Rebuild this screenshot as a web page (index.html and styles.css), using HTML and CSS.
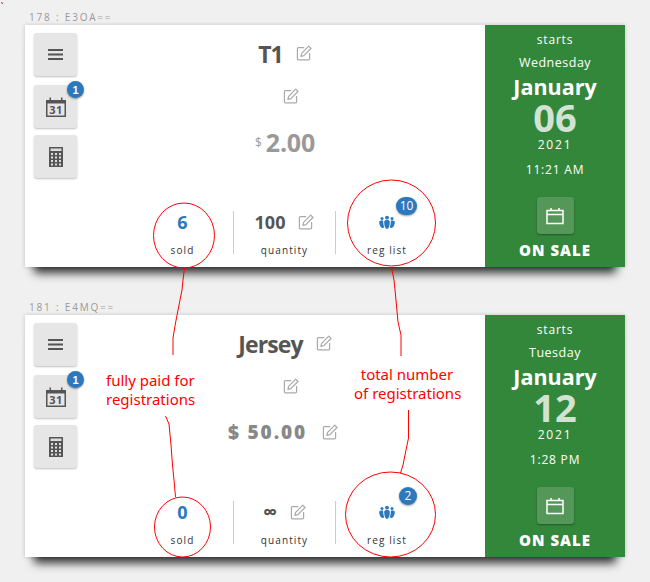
FILE: index.html
```html
<!DOCTYPE html>
<html lang="en">
<head>
<meta charset="utf-8">
<title>Tickets</title>
<link rel="stylesheet" href="styles.css">
</head>
<body>
<svg width="0" height="0" class="defs">
  <defs>
    <symbol id="edit" viewBox="0 0 16 16">
      <path d="M8.2 2.6H2.4a1 1 0 0 0-1 1v10.2a1 1 0 0 0 1 1h10.2a1 1 0 0 0 1-1V8" fill="none" stroke="currentColor" stroke-width="1.2"/>
      <path d="M5.6 8.4 12.7 1.2l2.3 2.3-7.1 7.2-3 .7z" fill="none" stroke="currentColor" stroke-width="1.2" stroke-linejoin="round"/>
    </symbol>
    <symbol id="people" viewBox="0 0 16 14">
      <circle cx="8" cy="2.2" r="1.9"/><circle cx="3" cy="3" r="1.5"/><circle cx="13" cy="3" r="1.5"/>
      <path d="M5.2 6.2c0-1 1-1.6 2.8-1.6s2.8.6 2.8 1.6c0 3-.8 7.3-2.8 7.3S5.2 9.200 5.200 6.200z"/>
      <path d="M.2 6.500c0-1 1-1.500 2.800-1.500.5 0 .8 0 1.200.2-.2 2 .3 4.800 1.100 6.500-.5.600-1.100.8-1.700.8C1.600 12.500.200 9 .200 6.500zM15.800 6.500c0-1-1-1.500-2.800-1.500-.5 0-.8 0-1.200.2.200 2-.3 4.800-1.100 6.500.5.600 1.100.8 1.700.8 2 0 3.400-3.500 3.400-6z"/>
    </symbol>
    <symbol id="menu" viewBox="0 0 15 11">
      <rect width="15" height="2"/><rect y="4.500" width="15" height="2"/><rect y="9" width="15" height="2"/>
    </symbol>
    <symbol id="calendar" viewBox="0 0 20 20">
      <path d="M0 3h3.500V.5h1.500V3h10V.5h1.500V3H20v17H0z" fill="#555"/>
      <rect x="1.500" y="6.500" width="17" height="12" fill="#e6e6e6"/>
      <text x="10" y="17" class="cal-num">31</text>
    </symbol>
    <symbol id="calc" viewBox="0 0 14 20">
      <rect width="14" height="20" fill="#555"/>
      <rect x="1.500" y="1.500" width="11" height="2.500" fill="#ddd"/>
      <path d="M2 6h2v2H2zM6 6h2v2H6zM10 6h2v2h-2zM2 9.500h2v2H2zM6 9.500h2v2H6zM10 9.500h2v2h-2zM2 13h2v2H2zM6 13h2v2H6zM10 13h2v2h-2zM2 16.500h2v2H2zM6 16.500h2v2H6zM10 16.500h2v2h-2z" fill="#ddd"/>
    </symbol>
    <symbol id="cal-outline" viewBox="0 0 18 18">
      <path d="M1 3.500h16v13H1zM1 7.500h16M5 1v3M13 1v3" fill="none" stroke="currentColor" stroke-width="1.500"/>
    </symbol>
  </defs>
</svg>

<section class="ticket">
  <div class="code">178 : E3OA==</div>
  <div class="card">
    <div class="tools">
      <button class="tool"><svg class="i-menu"><use href="#menu"/></svg></button>
      <button class="tool"><svg class="i-cal"><use href="#calendar"/></svg><span class="badge tool-badge">1</span></button>
      <button class="tool"><svg class="i-calc"><use href="#calc"/></svg></button>
    </div>
    <div class="main">
      <div class="title-row"><span class="title">T1</span><svg class="edit title-edit"><use href="#edit"/></svg></div>
      <div class="desc-row"><svg class="edit"><use href="#edit"/></svg></div>
      <div class="price-row"><span class="cur">$</span><span class="price">2.00</span></div>
      <div class="stats">
        <div class="stat"><div class="val blue">6</div><div class="lab">sold</div></div>
        <div class="stat bordered"><div class="val">100<svg class="edit val-edit"><use href="#edit"/></svg></div><div class="lab">quantity</div></div>
        <div class="stat"><div class="val blue reg"><svg class="i-people"><use href="#people"/></svg><span class="badge reg-badge wide">10</span></div><div class="lab">reg list</div></div>
      </div>
    </div>
    <aside class="side">
      <div class="l-starts">starts</div>
      <div class="l-day">Wednesday</div>
      <div class="l-month">January</div>
      <div class="l-date">06</div>
      <div class="l-year">2021</div>
      <div class="l-time">11:21 AM</div>
      <button class="cal-btn"><svg class="i-outline"><use href="#cal-outline"/></svg></button>
      <div class="l-sale">ON SALE</div>
    </aside>
  </div>
</section>

<section class="ticket">
  <div class="code">181 : E4MQ==</div>
  <div class="card">
    <div class="tools">
      <button class="tool"><svg class="i-menu"><use href="#menu"/></svg></button>
      <button class="tool"><svg class="i-cal"><use href="#calendar"/></svg><span class="badge tool-badge">1</span></button>
      <button class="tool"><svg class="i-calc"><use href="#calc"/></svg></button>
    </div>
    <div class="main">
      <div class="title-row"><span class="title">Jersey</span><svg class="edit title-edit"><use href="#edit"/></svg></div>
      <div class="desc-row"><svg class="edit"><use href="#edit"/></svg></div>
      <div class="price-row price-row-wide"><span class="price-wide">$ 50.00</span><svg class="edit price-edit"><use href="#edit"/></svg></div>
      <div class="stats">
        <div class="stat"><div class="val blue">0</div><div class="lab">sold</div></div>
        <div class="stat bordered"><div class="val"><span class="inf">∞</span><svg class="edit val-edit"><use href="#edit"/></svg></div><div class="lab">quantity</div></div>
        <div class="stat"><div class="val blue reg"><svg class="i-people"><use href="#people"/></svg><span class="badge reg-badge">2</span></div><div class="lab">reg list</div></div>
      </div>
    </div>
    <aside class="side">
      <div class="l-starts">starts</div>
      <div class="l-day">Tuesday</div>
      <div class="l-month">January</div>
      <div class="l-date">12</div>
      <div class="l-year">2021</div>
      <div class="l-time">1:28 PM</div>
      <button class="cal-btn"><svg class="i-outline"><use href="#cal-outline"/></svg></button>
      <div class="l-sale">ON SALE</div>
    </aside>
  </div>
</section>

<svg class="marks" width="650" height="582" viewBox="0 0 650 582">
  <ellipse cx="184" cy="235.500" rx="30.500" ry="32.500"/>
  <ellipse cx="391.500" cy="223" rx="44" ry="43"/>
  <ellipse cx="182.500" cy="527" rx="28" ry="30"/>
  <ellipse cx="390.500" cy="514.500" rx="45" ry="42.500"/>
  <path d="M184.500 268 183 280 182 290 179 305 175.500 323 173 338 173 355"/>
  <path d="M165.500 416 169 424 171 445 172.500 465 174 480 175.500 497"/>
  <path d="M391.500 267 394 280 395.500 295 398 322 401 335 401 356"/>
  <path d="M408.500 410 408.500 438 405 455 403 465 400.500 473"/>
  <path d="M1.500 2 2.500 4"/>
</svg>
<div class="note note-paid">fully paid for<br>registrations</div>
<div class="note note-total">total number<br>of registrations</div>
</body>
</html>
```
FILE: styles.css
```css
* { box-sizing: border-box; }
html, body { margin: 0; height: 582px; overflow: hidden; }
body {
  position: relative;
  padding: 11px 25px 0;
  background: #f0f0f0;
  font-family: "Open Sans", "Noto Sans", sans-serif;
  color: #555;
}
.defs { position: absolute; }
.ticket { height: 290px; }
.code {
  height: 14px;
  padding-left: 4px;
  font-size: 10px;
  line-height: 13px;
  letter-spacing: 1.800px;
  color: #999;
}
.card {
  display: flex;
  width: 600px;
  height: 242px;
  background: #fff;
  box-shadow: 0 0 4px rgba(0,0,0,.2), 0 15px 9px -9px rgba(0,0,0,.8);
}
.tools {
  display: flex;
  flex-direction: column;
  width: 60px;
  padding: 8px 0 0 9px;
}
.tool {
  position: relative;
  display: flex;
  align-items: center;
  justify-content: center;
  width: 43px;
  height: 43px;
  margin: 0 0 7px;
  padding: 0;
  border: 0;
  border-radius: 3px;
  background: #e6e6e6;
  box-shadow: 0 1px 2px rgba(0,0,0,.25);
  color: #555;
}
.tool:nth-child(2) { margin-top: 2px; }
.i-menu { width: 15px; height: 11px; fill: #555; }
.i-cal { width: 20px; height: 20px; }
.i-calc { width: 14px; height: 20px; }
.cal-num { font: 700 11px "Open Sans", sans-serif; text-anchor: middle; fill: #555; letter-spacing: .4px; }
.badge {
  position: absolute;
  display: flex;
  align-items: center;
  justify-content: center;
  border-radius: 50%;
  background: #2b78bd;
  color: #fff;
  font-size: 11px;
  font-weight: 600;
  box-shadow: 0 1px 2px rgba(0,0,0,.4);
}
.tool-badge { top: -4px; right: -7px; width: 17px; height: 17px; }
.main {
  display: flex;
  flex-direction: column;
  align-items: center;
  width: 400px;
}
.title-row { display: flex; align-items: center; height: 30px; margin-top: 14px; }
.title { font-size: 23px; font-weight: 700; line-height: 30px; letter-spacing: -.9px; color: #555; }
.edit { width: 16px; height: 16px; color: #aaa; flex: none; }
.title-edit { margin-left: 13px; margin-top: -2px; }
.desc-row { display: flex; height: 16px; margin-top: 19px; margin-left: 12px; }
.price-row { display: flex; align-items: center; height: 34px; margin-top: 21px; }
.price-row-wide { margin-right: 4px; }
.cur { font-size: 12px; color: #999; margin-right: 4px; }
.price { font-size: 25px; font-weight: 700; color: #999; letter-spacing: -.2px; }
.price-wide { font-size: 19px; font-weight: 800; color: #888; letter-spacing: 1.900px; }
.price-edit { margin-left: 15px; }
.stats { display: flex; margin-top: auto; margin-bottom: 13px; height: 43px; }
.stat { display: flex; flex-direction: column; align-items: center; width: 102px; }
.stat:first-child { width: 101px; }
.bordered { width: 103px; border: solid #ccc; border-width: 0 1px; }
.val {
  position: relative;
  display: flex;
  flex: none;
  align-items: center;
  justify-content: center;
  height: 22px;
  font-size: 18px;
  line-height: 22px;
  font-weight: 700;
  color: #555;
}
.blue { color: #2b78bd; }
.val-edit { margin-left: 13px; margin-top: -1px; }
.inf { font-size: 20px; line-height: 22px; }
.lab { flex: none; margin-top: 10px; font-size: 10px; line-height: 15px; letter-spacing: 1.100px; color: #333; }
.reg { width: 100%; }
.i-people { width: 16px; height: 15px; fill: #2b78bd; margin-top: 1px; }
.reg-badge { top: -14px; left: 63px; width: 18px; height: 18px; font-weight: 400; font-size: 12px; }
.wide { left: 60px; width: 21px; border-radius: 9px; }
.side {
  display: flex;
  flex-direction: column;
  align-items: center;
  width: 140px;
  padding-top: 5px;
  background: #33873b;
  color: #fff;
}
.l-starts { height: 20px; font-size: 12px; line-height: 20px; letter-spacing: .8px; }
.l-day { height: 20px; margin-top: 3px; font-size: 12.500px; line-height: 20px; letter-spacing: .5px; }
.l-month { height: 26px; margin-top: 1px; font-size: 21.500px; font-weight: 700; line-height: 26px; }
.l-date { height: 36px; margin-top: -1px; font-size: 38px; font-weight: 700; line-height: 36px; color: #d2e3d4; }
.l-year { height: 16px; margin-top: 2px; font-size: 12px; line-height: 16px; letter-spacing: 1.800px; }
.l-time { height: 16px; margin-top: 9px; font-size: 12px; line-height: 16px; letter-spacing: .8px; }
.cal-btn {
  display: flex;
  align-items: center;
  justify-content: center;
  width: 37px;
  height: 37px;
  margin-top: 19px;
  padding: 0;
  border: 0;
  border-radius: 3px;
  background: #559659;
  box-shadow: 0 1px 2px rgba(0,0,0,.35);
  color: #fff;
}
.i-outline { width: 18px; height: 18px; }
.l-sale { margin-top: 6px; font-size: 15px; font-weight: 800; line-height: 20px; letter-spacing: 1px; }
.marks { position: absolute; top: 0; left: 0; pointer-events: none; }
.marks ellipse, .marks path { fill: none; stroke: #f00; stroke-width: 1; }
.note {
  position: absolute;
  color: #f00;
  font-family: "Noto Sans", sans-serif;
  font-size: 15px;
  line-height: 19px;
}
.note-paid { top: 371px; left: 106px; }
.note-total { top: 365px; left: 354px; width: 106px; text-align: center; white-space: nowrap; }
```
